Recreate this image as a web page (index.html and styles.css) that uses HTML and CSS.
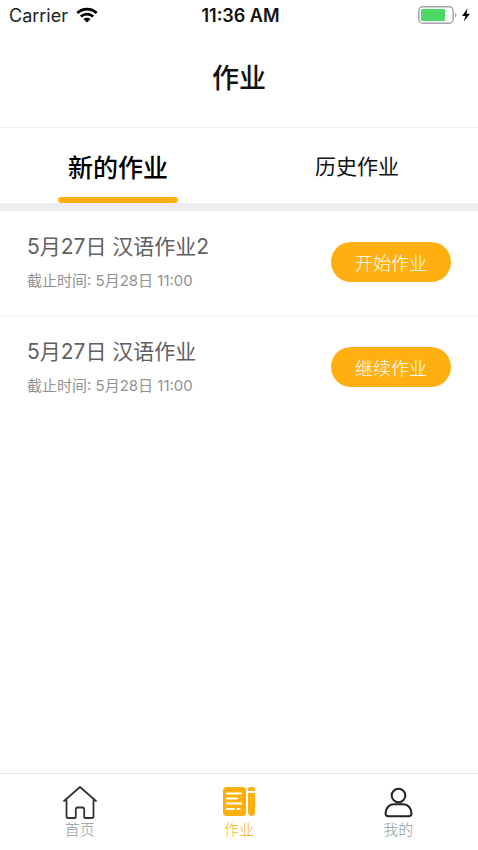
FILE: index.html
```html
<!DOCTYPE html>
<html lang="zh-CN">
<head>
<meta charset="utf-8">
<meta name="viewport" content="width=device-width, initial-scale=1">
<title>作业</title>
<link rel="stylesheet" href="styles.css">
</head>
<body>
<div class="app">
  <div class="status">
    <div class="status-left">
      <span>Carrier</span>
      <svg width="22" height="16" viewBox="0 0 22 16" aria-hidden="true">
        <g fill="none" stroke="#000" stroke-width="2.7">
          <path d="M1.3 6C6.8.7 15.2.7 20.7 6"/>
          <path d="M4.8 9.6c3.6-3.3 8.8-3.3 12.4 0"/>
        </g>
        <path d="M11 15.6 7.4 12c2-1.8 5.2-1.8 7.2 0z"/>
      </svg>
    </div>
    <time class="status-time">11:36 AM</time>
    <div class="status-right">
      <svg width="54" height="18" viewBox="0 0 54 18" aria-hidden="true">
        <rect x=".8" y=".8" width="34.4" height="16.4" rx="4" fill="#fff" stroke="#a5a5a5" stroke-width="1.5"/>
        <rect x="3" y="3" width="24" height="12" rx="1" fill="#4cd964"/>
        <path d="M37 6.5c2 .8 2 4.2 0 5z" fill="#a5a5a5"/>
        <path d="M49.5 2.5 44 10h3.4l-1.6 5.5L52 7.7h-3.5z"/>
      </svg>
    </div>
  </div>
  <header class="header"><h1>作业</h1></header>
  <nav class="tabs">
    <button class="tab tab-active" type="button">新的作业</button>
    <button class="tab" type="button">历史作业</button>
  </nav>
  <main class="list">
    <section class="row">
      <div class="info">
        <h2>5月27日 汉语作业2</h2>
        <p>截止时间: 5月28日 11:00</p>
      </div>
      <button class="action" type="button">开始作业</button>
    </section>
    <section class="row">
      <div class="info">
        <h2>5月27日 汉语作业</h2>
        <p>截止时间: 5月28日 11:00</p>
      </div>
      <button class="action" type="button">继续作业</button>
    </section>
  </main>
  <nav class="bottom">
    <a href="#home">
      <svg width="36" height="34" viewBox="0 0 36 34" fill="none" stroke="#333" stroke-width="1.8" stroke-linecap="round" stroke-linejoin="round" aria-hidden="true">
        <path d="M2 16 18 2l16 14M4.500 14v17.300q0 1.700 1.700 1.700h6.600q1 0 1-1v-7.800q0-1.700 1.700-1.700h5q1.700 0 1.700 1.700v7.800q0 1 1 1h6.600q1.700 0 1.700-1.700V14"/>
      </svg>
      <span>首页</span>
    </a>
    <a href="#work" class="current">
      <svg width="36" height="34" viewBox="0 0 36 34" aria-hidden="true">
        <rect x="2" y="2" width="23" height="29" rx="3.5" fill="#ffb010"/>
        <path d="M6 8.500h14M6 13.500h10M6 18.500h14M6 24h7M16.500 24h2" fill="none" stroke="#fff" stroke-width="2" stroke-linecap="round"/>
        <path d="M27 6V4q0-2 2-2h3q2 0 2 2v2zM27 8h7v19q0 4-3.500 4T27 27z" fill="#ffb010"/>
      </svg>
      <span>作业</span>
    </a>
    <a href="#me">
      <svg width="36" height="34" viewBox="0 0 36 34" fill="none" stroke="#222" stroke-width="2" aria-hidden="true">
        <circle cx="18.500" cy="10.500" r="6.800"/>
        <path d="M13.500 19.300h10c4.500 0 8 4.200 8 9q0 3-3 3h-20q-3 0-3-3c0-4.800 3.500-9 8-9z"/>
      </svg>
      <span>我的</span>
    </a>
  </nav>
</div>
</body>
</html>
```
FILE: styles.css
```css
* { box-sizing: border-box; }
body {
  margin: 0;
  background: #fff;
  color: #111;
  font-family: Inter, "Noto Sans CJK SC", sans-serif;
}
h1, h2, p { margin: 0; }
button { border: 0; background: none; font: inherit; color: inherit; padding: 0; }
.app { min-height: 100vh; display: flex; flex-direction: column; }
.status {
  height: 30px;
  padding: 0 6px 0 9px;
  display: grid;
  grid-template-columns: 1fr auto 1fr;
  align-items: center;
  font-size: 18px;
}
.status-left { display: flex; align-items: center; gap: 8px; color: #222; }
.status-time { font-weight: 600; }
.status-right { display: flex; justify-content: flex-end; }
.header {
  height: 98px;
  display: flex;
  align-items: center;
  justify-content: center;
  border-bottom: 1px solid #ededed;
}
.header h1 { font-size: 27px; font-weight: 500; line-height: 38px; }
.tabs {
  height: 83px;
  display: grid;
  grid-template-columns: 1fr 1fr;
  border-bottom: 8px solid #ededed;
}
.tab { position: relative; font-size: 21px; margin: 0 3px 2px 0; }
.tab-active { font-size: 25px; font-weight: 500; color: #000; margin-bottom: 0; }
.tab-active::after {
  content: "";
  position: absolute;
  left: calc(50% - 60px);
  width: 120px;
  bottom: 0;
  height: 6px;
  border-radius: 3px;
  background: #ffb010;
}
.list { flex: 1; }
.row {
  display: flex;
  align-items: center;
  justify-content: space-between;
  padding: 21px 27px 23px;
  border-bottom: 1px solid #f5f5f5;
}
.row:last-child { border-bottom: 0; }
.info h2 { font-size: 21px; font-weight: 400; line-height: 30px; color: #606060; }
.info p { margin-top: 8px; font-size: 15px; line-height: 22px; color: #929292; }
.action {
  width: 120px;
  height: 40px;
  border-radius: 20px;
  background: #ffb010;
  color: #fff;
  font-size: 18px;
  font-weight: 300;
}
.bottom {
  height: 77px;
  padding-top: 11px;
  display: grid;
  grid-template-columns: 1fr 1fr 1fr;
  border-top: 1px solid #e5e5e5;
}
.bottom a {
  display: flex;
  flex-direction: column;
  align-items: center;
  color: #929a9d;
  font-size: 15px;
  font-weight: 300;
  line-height: 22px;
  text-decoration: none;
}
.bottom .current { color: #ffb010; }
```
